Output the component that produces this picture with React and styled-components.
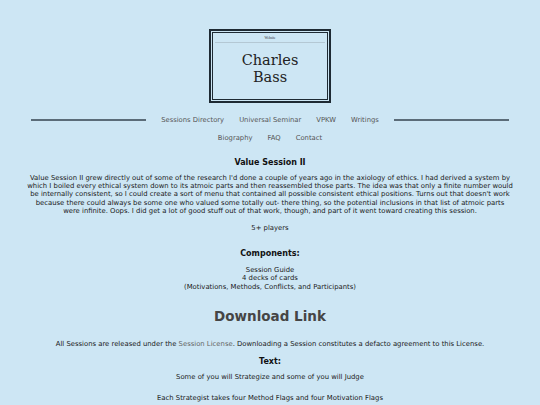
import React from "react";
import styled, { createGlobalStyle } from "styled-components";

const Global = createGlobalStyle`
  html, body { margin: 0; padding: 0; background: #cde6f4; }
  body { font-family: "DejaVu Sans", Verdana, sans-serif; color: #1a1a1a; }
`;

const Page = styled.div`
  padding: 29px 27px 0;
  display: flex;
  flex-direction: column;
  align-items: center;
`;

const Masthead = styled.div`
  width: 118px;
  height: 70px;
  border: 2px solid #1e2a33;
  box-shadow: inset 0 0 0 1px #cde6f4, inset 0 0 0 2px #1e2a33;
  display: flex;
  flex-direction: column;
  align-items: center;
`;

const Tag = styled.div`
  width: 110px;
  margin-top: 5px;
  padding-bottom: 2px;
  border-bottom: 1px solid #b4c8d4;
  font-family: "Liberation Serif", serif;
  font-size: 3.5px;
  text-align: center;
  color: #333;
`;

const Name = styled.h1`
  margin: 9px 0 0;
  font-family: "DejaVu Serif", "Liberation Serif", serif;
  font-weight: normal;
  font-size: 14.5px;
  line-height: 17px;
  text-align: center;
  color: #222;
`;

const NavRow = styled.nav`
  align-self: stretch;
  display: flex;
  align-items: center;
  gap: 15px;
  margin: ${(p) => p.$mt}px 4px 0;
  justify-content: center;
`;

const Rule = styled.div`
  flex: 1;
  height: 2px;
  background: #5b6c78;
`;

const NavLink = styled.a`
  font-size: 6.8px;
  color: #555;
  text-decoration: none;
  line-height: 8px;
`;

const Title = styled.h2`
  margin: ${(p) => p.$mt}px 0 0;
  font-size: 8px;
  line-height: 10px;
  font-weight: bold;
  color: #111;
  text-align: center;
`;

const Text = styled.p`
  margin: ${(p) => p.$mt}px 0 0;
  font-size: 6.85px;
  line-height: 8.2px;
  text-align: center;
  color: #1a1a1a;
`;

const Download = styled.a`
  margin-top: 17px;
  font-size: 13.5px;
  line-height: 16px;
  font-weight: bold;
  color: #454545;
  text-decoration: none;
`;

const Inline = styled.a`
  color: #666;
  text-decoration: none;
`;

export default function App() {
  return (
    <>
      <Global />
      <Page>
        <Masthead>
          <Tag>Website</Tag>
          <Name>
            Charles
            <br />
            Bass
          </Name>
        </Masthead>
        <NavRow $mt={13}>
          <Rule />
          <NavLink href="#">Sessions Directory</NavLink>
          <NavLink href="#">Universal Seminar</NavLink>
          <NavLink href="#">VPKW</NavLink>
          <NavLink href="#">Writings</NavLink>
          <Rule />
        </NavRow>
        <NavRow $mt={10}>
          <NavLink href="#">Biography</NavLink>
          <NavLink href="#">FAQ</NavLink>
          <NavLink href="#">Contact</NavLink>
        </NavRow>
        <Title $mt={16}>Value Session II</Title>
        <Text $mt={6}>
          Value Session II grew directly out of some of the research I'd done a couple of years ago in the axiology of
          ethics. I had derived a system by which I boiled every ethical system down to its atmoic parts and then
          reassembled those parts. The idea was that only a finite number would be internally consistent, so I could
          create a sort of menu that contained all possible consistent ethical positions. Turns out that doesn't work
          because there could always be some one who valued some totally out- there thing, so the potential inclusions
          in that list of atmoic parts were infinite. Oops. I did get a lot of good stuff out of that work, though, and
          part of it went toward creating this session.
        </Text>
        <Text $mt={9}>5+ players</Text>
        <Title $mt={17}>Components:</Title>
        <Text $mt={7}>
          Session Guide
          <br />4 decks of cards
          <br />
          (Motivations, Methods, Conflicts, and Participants)
        </Text>
        <Download href="#">Download Link</Download>
        <Text $mt={16}>
          All Sessions are released under the <Inline href="#">Session License</Inline>. Downloading a Session
          constitutes a defacto agreement to this License.
        </Text>
        <Title $mt={9}>Text:</Title>
        <Text $mt={6}>Some of you will Strategize and some of you will Judge</Text>
        <Text $mt={13}>Each Strategist takes four Method Flags and four Motivation Flags</Text>
      </Page>
    </>
  );
}
